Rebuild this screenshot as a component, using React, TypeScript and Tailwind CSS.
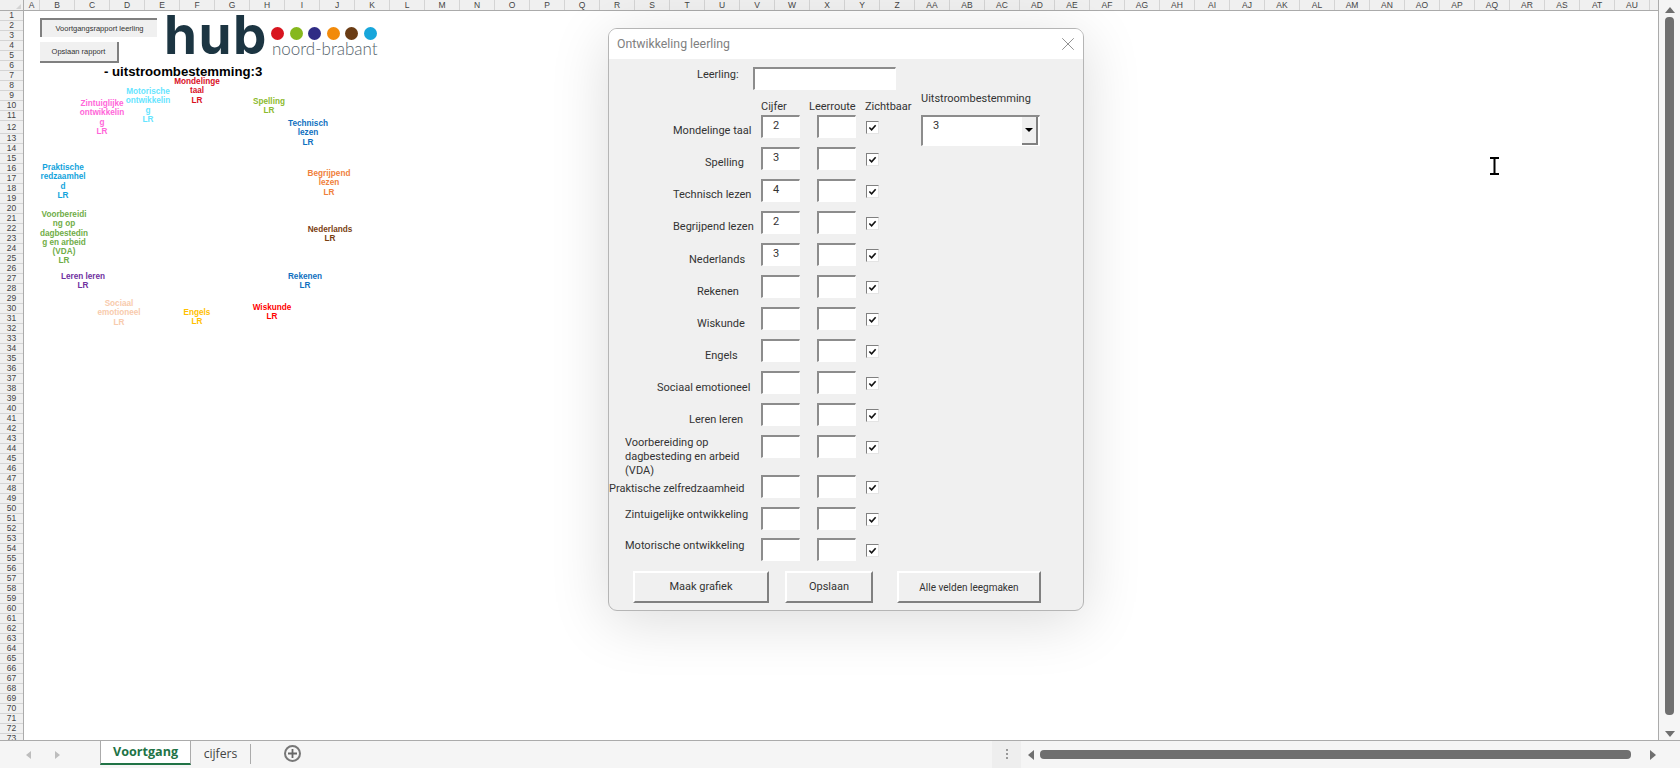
import { X } from 'lucide-react';

const columns = ['A', 'B', 'C', 'D', 'E', 'F', 'G', 'H', 'I', 'J', 'K', 'L', 'M', 'N', 'O', 'P', 'Q', 'R', 'S', 'T', 'U', 'V', 'W', 'X', 'Y', 'Z', 'AA', 'AB', 'AC', 'AD', 'AE', 'AF', 'AG', 'AH', 'AI', 'AJ', 'AK', 'AL', 'AM', 'AN', 'AO', 'AP', 'AQ', 'AR', 'AS', 'AT', 'AU'];
const rowNumbers = Array.from({ length: 73 }, (_, i) => i + 1);
const dotColors = ['bg-[#d8151f]', 'bg-[#86b81d]', 'bg-[#2f2c85]', 'bg-[#f28a0a]', 'bg-[#6a3c14]', 'bg-[#17a6db]'];

// positions are relative to the sheet area, chart labels sit freely on it
const chartLabels = [
  { lines: ['Mondelinge', 'taal', 'LR'], className: 'left-[173px] top-[66px] text-[#d9101f]' },
  { lines: ['Motorische', 'ontwikkelin', 'g', 'LR'], className: 'left-[124px] top-[76px] text-[#66e5ff]' },
  { lines: ['Zintuiglijke', 'ontwikkelin', 'g', 'LR'], className: 'left-[78px] top-[88px] text-[#ff66d9]' },
  { lines: ['Spelling', 'LR'], className: 'left-[245px] top-[86px] text-[#8cba2e]' },
  { lines: ['Technisch', 'lezen', 'LR'], className: 'left-[284px] top-[108px] text-[#0f70c0]' },
  { lines: ['Begrijpend', 'lezen', 'LR'], className: 'left-[305px] top-[158px] text-[#f0803c]' },
  { lines: ['Praktische', 'redzaamhel', 'd', 'LR'], className: 'left-[39px] top-[152px] text-[#12a3dc]' },
  { lines: ['Voorbereidi', 'ng op', 'dagbestedin', 'g en arbeid', '(VDA)', 'LR'], className: 'left-[40px] top-[199px] text-[#70ad47]' },
  { lines: ['Nederlands', 'LR'], className: 'left-[306px] top-[214px] text-[#7a3e12]' },
  { lines: ['Leren leren', 'LR'], className: 'left-[59px] top-[261px] text-[#7030a0]' },
  { lines: ['Rekenen', 'LR'], className: 'left-[281px] top-[261px] text-[#1070c0]' },
  { lines: ['Sociaal', 'emotioneel', 'LR'], className: 'left-[95px] top-[288px] text-[#f8cbad]' },
  { lines: ['Engels', 'LR'], className: 'left-[173px] top-[297px] text-[#ffc000]' },
  { lines: ['Wiskunde', 'LR'], className: 'left-[248px] top-[292px] text-[#ff0000]' },
];

const formRows = [
  { label: ['Mondelinge taal'], value: '2', rowClass: 'h-[32px]', labelClass: 'pl-[64px] pt-[9px]' },
  { label: ['Spelling'], value: '3', rowClass: 'h-[32px]', labelClass: 'pl-[96px] pt-[9px]' },
  { label: ['Technisch lezen'], value: '4', rowClass: 'h-[32px]', labelClass: 'pl-[64px] pt-[9px]' },
  { label: ['Begrijpend lezen'], value: '2', rowClass: 'h-[32px]', labelClass: 'pl-[64px] pt-[9px]' },
  { label: ['Nederlands'], value: '3', rowClass: 'h-[32px]', labelClass: 'pl-[80px] pt-[10px]' },
  { label: ['Rekenen'], value: '', rowClass: 'h-[32px]', labelClass: 'pl-[88px] pt-[10px]' },
  { label: ['Wiskunde'], value: '', rowClass: 'h-[32px]', labelClass: 'pl-[88px] pt-[10px]' },
  { label: ['Engels'], value: '', rowClass: 'h-[32px]', labelClass: 'pl-[96px] pt-[10px]' },
  { label: ['Sociaal emotioneel'], value: '', rowClass: 'h-[32px]', labelClass: 'pl-[48px] pt-[10px]' },
  { label: ['Leren leren'], value: '', rowClass: 'h-[32px]', labelClass: 'pl-[80px] pt-[10px]' },
  { label: ['Voorbereiding op', 'dagbesteding en arbeid', '(VDA)'], value: '', rowClass: 'h-[40px]', labelClass: 'pl-[16px] pt-[1px]' },
  { label: ['Praktische zelfredzaamheid'], value: '', rowClass: 'h-[32px]', labelClass: 'pl-0 pt-[7px]' },
  { label: ['Zintuigelijke ontwikkeling'], value: '', rowClass: 'h-[31px]', labelClass: 'pl-[16px] pt-[1px]' },
  { label: ['Motorische ontwikkeling'], value: '', rowClass: 'h-[32px]', labelClass: 'pl-[16px] pt-[1px]' },
];

function SunkenBox({ value, className }: { value?: string; className: string }) {
  return (
    <div className={`border-t-2 border-l-2 border-r border-b border-t-[#8c8c8c] border-l-[#8c8c8c] border-r-white border-b-white bg-white pl-[10px] pt-[2px] text-[11px] leading-[14px] text-[#333] ${className}`}>
      {value}
    </div>
  );
}

function CheckBox() {
  return (
    <div className="mt-[6px] flex h-[13px] w-[13px] items-center justify-center border border-t-[#808080] border-l-[#808080] border-r-[#e4e4e4] border-b-[#e4e4e4] bg-white">
      <svg viewBox="0 0 10 10" className="h-[9px] w-[9px]">
        <path d="M1.5 5 L4 7.5 L8.5 2.5" fill="none" stroke="#111" strokeWidth="1.8" />
      </svg>
    </div>
  );
}

function RaisedButton({ children, className }: { children: string; className: string }) {
  return (
    <button className={`h-[32px] border-2 border-t-white border-l-white border-r-[#808080] border-b-[#808080] bg-[#f0f0f0] text-[#333] ${className}`}>
      {children}
    </button>
  );
}

export default function App() {
  return (
    <div className="relative flex h-[768px] w-[1680px] flex-col overflow-hidden bg-white font-['Liberation_Sans',sans-serif]">
      {/* column header */}
      <div className="flex h-[11px] shrink-0">
        <div className="relative w-[24px] shrink-0 border-r border-b border-[#ababab] bg-[#f0f0f0]">
          <div className="absolute right-[2px] bottom-[1px] h-0 w-0 border-b-[5px] border-l-[5px] border-b-[#d4d4d4] border-l-transparent" />
        </div>
        <div className="flex w-[1635px] shrink-0 border-r border-b border-[#ababab] bg-[#f0f0f0]">
          {columns.map((col, i) => (
            <div
              key={col}
              className={`flex shrink-0 items-center justify-center border-r border-[#d4d4d4] text-[8.5px] leading-none text-[#444] ${i === 0 ? 'w-[16px]' : 'w-[35px]'}`}
            >
              {col}
            </div>
          ))}
        </div>
        <div className="flex-1 bg-[#f5f5f5]" />
      </div>

      {/* sheet */}
      <div className="flex min-h-0 flex-1">
        <div className="w-[24px] shrink-0 overflow-hidden border-r border-[#ababab] bg-[#f0f0f0]">
          {rowNumbers.map(n => (
            <div
              key={n}
              className={`flex items-center justify-center border-b border-[#d4d4d4] text-[8.5px] leading-none text-[#444] ${n === 12 ? 'h-[13px]' : 'h-[10px]'}`}
            >
              {n}
            </div>
          ))}
        </div>

        <div className="relative w-[1635px] shrink-0 border-r border-[#ababab] bg-white">
          <div className="absolute left-[16px] top-[7px] flex h-[19px] w-[117px] items-center justify-center border-t-2 border-l-2 border-t-[#808080] border-l-[#808080] bg-[#f0f0f0] text-[7.5px] text-[#333]">
            Voortgangsrapport leerling
          </div>
          <div className="absolute left-[16px] top-[31px] flex h-[21px] w-[79px] items-center justify-center border-r-2 border-b-2 border-r-[#808080] border-b-[#808080] bg-[#f0f0f0] text-[7.5px] text-[#333]">
            Opslaan rapport
          </div>

          {/* logo */}
          <div className="absolute left-[140px] top-[2px] font-['Inter',sans-serif] text-[53px] font-bold leading-[44px] tracking-[1.5px] text-[#1c3542]">
            hub
          </div>
          <div className="absolute left-[247px] top-[16px] flex gap-[5.6px]">
            {dotColors.map(color => (
              <div key={color} className={`h-[13px] w-[13px] rounded-full ${color}`} />
            ))}
          </div>
          <div className="absolute left-[248px] top-[28px] font-['Lato',sans-serif] text-[17px] font-light leading-[20px] text-[#55636b]">
            noord-brabant
          </div>

          <div className="absolute left-[80px] top-[52px] whitespace-nowrap text-[13.2px] font-bold leading-[18px] text-black">
            - uitstroombestemming:3
          </div>

          {chartLabels.map(item => (
            <div key={item.lines[0]} className={`absolute -translate-x-1/2 whitespace-nowrap text-center text-[8.2px] font-bold leading-[9.3px] ${item.className}`}>
              {item.lines.map((line, i) => (
                <div key={i}>{line}</div>
              ))}
            </div>
          ))}

          {/* mouse cursor */}
          <svg viewBox="0 0 11 18" className="absolute left-[1465px] top-[146px] h-[18px] w-[11px]">
            <path d="M1 1 H10 M5.5 1 V17 M1 17 H10" stroke="#000" strokeWidth="2" fill="none" />
          </svg>
        </div>

        {/* vertical scrollbar */}
        <div className="flex w-[21px] flex-col items-center bg-[#f5f5f5] pt-[1px]">
          <div className="mb-[4px] mt-[-5px] h-0 w-0 border-x-[5px] border-b-[6px] border-x-transparent border-b-[#6f6f6f]" />
          <div className="h-[698px] w-[9px] rounded-[4px] bg-[#6f6f6f]" />
          <div className="mt-[16px] h-0 w-0 border-x-[5px] border-t-[6px] border-x-transparent border-t-[#6f6f6f]" />
        </div>
      </div>

      {/* tab bar */}
      <div className="flex h-[28px] shrink-0 border-t border-[#ababab] bg-[#f5f5f5]">
        <div className="flex w-[100px] shrink-0 items-center pl-[26px]">
          <div className="h-0 w-0 border-y-[4px] border-r-[5px] border-y-transparent border-r-[#bdbdbd]" />
          <div className="ml-[24px] h-0 w-0 border-y-[4px] border-l-[5px] border-y-transparent border-l-[#bdbdbd]" />
        </div>
        <div className="flex h-[24px] w-[91px] shrink-0 items-center justify-center border-x border-b-2 border-x-[#ababab] border-b-[#217346] bg-white font-['Open_Sans',sans-serif] text-[12.6px] font-bold text-[#217346]">
          Voortgang
        </div>
        <div className="mt-[3px] flex h-[20px] w-[60px] shrink-0 items-center justify-center border-r border-[#ababab] font-['Open_Sans',sans-serif] text-[12.2px] text-[#444]">
          cijfers
        </div>
        <div className="ml-[33px] mt-[4px] flex h-[17px] w-[17px] items-center justify-center rounded-full border-2 border-[#777] text-[#666]">
          <svg viewBox="0 0 10 10" className="h-[9px] w-[9px]">
            <path d="M5 0 V10 M0 5 H10" stroke="#666" strokeWidth="2" />
          </svg>
        </div>
        <div className="ml-[691px] flex h-full w-[29px] flex-col items-center justify-center gap-[2px] bg-[#eeeeee] pb-[2px]">
          <div className="h-[2px] w-[2px] bg-[#999]" />
          <div className="h-[2px] w-[2px] bg-[#999]" />
          <div className="h-[2px] w-[2px] bg-[#999]" />
        </div>
        <div className="flex flex-1 items-center pl-[7px]">
          <div className="h-0 w-0 border-y-[5px] border-r-[6px] border-y-transparent border-r-[#6f6f6f]" />
          <div className="ml-[6px] h-[9px] w-[591px] rounded-[4px] bg-[#6f6f6f]" />
          <div className="ml-[19px] h-0 w-0 border-y-[5px] border-l-[6px] border-y-transparent border-l-[#6f6f6f]" />
        </div>
      </div>

      {/* user form dialog */}
      <div className="absolute left-[608px] top-[28px] flex h-[583px] w-[476px] flex-col overflow-hidden rounded-[9px] border border-[#b5b5b5] bg-[#f0f0f0] font-['Roboto',sans-serif] text-[11px] text-[#333] shadow-[0_10px_60px_rgba(0,0,0,0.14)]">
        <div className="flex h-[30px] shrink-0 items-center justify-between bg-white pl-[8px] pr-[4px]">
          <span className="text-[12.3px] text-[#808080]">Ontwikkeling leerling</span>
          <X size={22} strokeWidth={1} className="text-[#888]" />
        </div>

        <div className="flex h-[512px] shrink-0 pt-[8px]">
          <div className="w-[312px] shrink-0">
            <div className="flex h-[23px]">
              <div className="w-[144px] shrink-0 pl-[88px] pt-[1px] leading-[14px]">Leerling:</div>
              <SunkenBox className="h-[23px] w-[143px]" />
            </div>
            <div className="flex h-[25px] items-end">
              <div className="w-[152px] shrink-0" />
              <div className="w-[48px] shrink-0 leading-[16px]">Cijfer</div>
              <div className="w-[56px] shrink-0 leading-[16px]">Leerroute</div>
              <div className="leading-[16px]">Zichtbaar</div>
            </div>
            {formRows.map(row => (
              <div key={row.label[0]} className={`flex ${row.rowClass}`}>
                <div className={`w-[152px] shrink-0 whitespace-nowrap leading-[14px] ${row.labelClass}`}>
                  {row.label.map(line => (
                    <div key={line}>{line}</div>
                  ))}
                </div>
                <SunkenBox value={row.value} className="h-[23px] w-[39px] shrink-0" />
                <SunkenBox className="ml-[17px] h-[23px] w-[39px] shrink-0" />
                <div className="ml-[10px]">
                  <CheckBox />
                </div>
              </div>
            ))}
          </div>

          <div className="pt-[24px]">
            <div className="leading-[16px]">Uitstroombestemming</div>
            <div className="relative mt-[8px] h-[31px] w-[119px] border-t-2 border-l-2 border-r border-b border-t-[#8c8c8c] border-l-[#8c8c8c] border-r-white border-b-white bg-white pl-[10px] pt-[2px] text-[11px] leading-[14px]">
              3
              <div className="absolute right-[1px] top-0 flex h-[28px] w-[16px] items-center justify-center border-r-2 border-b-2 border-r-[#808080] border-b-[#808080] bg-[#f0f0f0]">
                <div className="h-0 w-0 border-x-[4px] border-t-[4px] border-x-transparent border-t-black" />
              </div>
            </div>
          </div>
        </div>

        <div className="flex pl-[24px]">
          <RaisedButton className="w-[136px] text-[11px]">Maak grafiek</RaisedButton>
          <RaisedButton className="ml-[16px] w-[88px] text-[11px]">Opslaan</RaisedButton>
          <RaisedButton className="ml-[24px] w-[144px] text-[10px]">Alle velden leegmaken</RaisedButton>
        </div>
      </div>
    </div>
  );
}
